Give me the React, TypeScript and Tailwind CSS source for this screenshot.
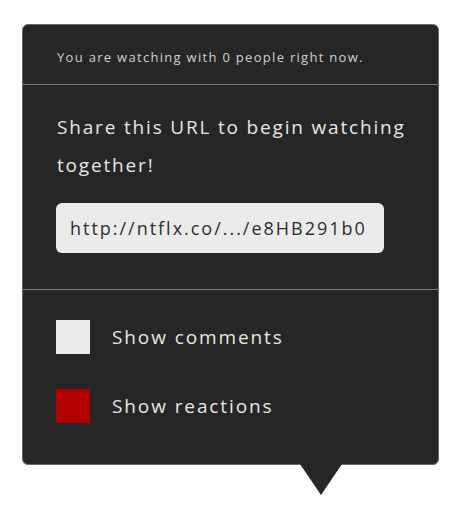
export default function App() {
  return (
    <div className="min-h-screen bg-white pl-[22px] pt-[24px]" style={{ fontFamily: '"Open Sans", "Lato", sans-serif' }}>
      <div className="relative w-[417px]">
        <div className="rounded-[6px] border border-[#6b6b6b] bg-[#262626]">
          <div className="px-[34px] pb-[17px] pt-[22px] text-[13px] leading-[20px] tracking-[0.1em] text-[#d0d0d0]">
            You are watching with 0 people right now.
          </div>
          <div className="h-px bg-[#7a7a7a]" />
          <div className="px-[33px] pb-[36px] pt-[23px]">
            <p className="whitespace-nowrap pl-px text-[19px] leading-[38px] tracking-[0.096em] text-[#e6e6e6]">
              Share this URL to begin watching
              <br />
              together!
            </p>
            <div className="mt-[19px] flex h-[50px] w-[328px] items-center rounded-[6px] bg-[#ebebeb] px-[14px] text-[18px] tracking-[0.11em] text-[#2e2e2e]">
              http://ntflx.co/.../e8HB291b0
            </div>
          </div>
          <div className="h-px bg-[#7a7a7a]" />
          <div className="flex flex-col gap-[35px] px-[33px] pb-[41px] pt-[30px]">
            <div className="flex items-center gap-[22px]">
              <span className="h-[34px] w-[34px] bg-[#ebebeb]" />
              <span className="text-[19px] tracking-[0.1em] text-[#e6e6e6]">Show comments</span>
            </div>
            <div className="flex items-center gap-[22px]">
              <span className="h-[34px] w-[34px] bg-[#b20000]" />
              <span className="text-[19px] tracking-[0.1em] text-[#e6e6e6]">Show reactions</span>
            </div>
          </div>
        </div>
        <svg className="absolute left-[278px] top-full -mt-px" width="42" height="31" viewBox="0 0 42 31">
          <path d="M0 0 L42 0 L21 31 Z" fill="#262626" />
        </svg>
      </div>
    </div>
  );
}
